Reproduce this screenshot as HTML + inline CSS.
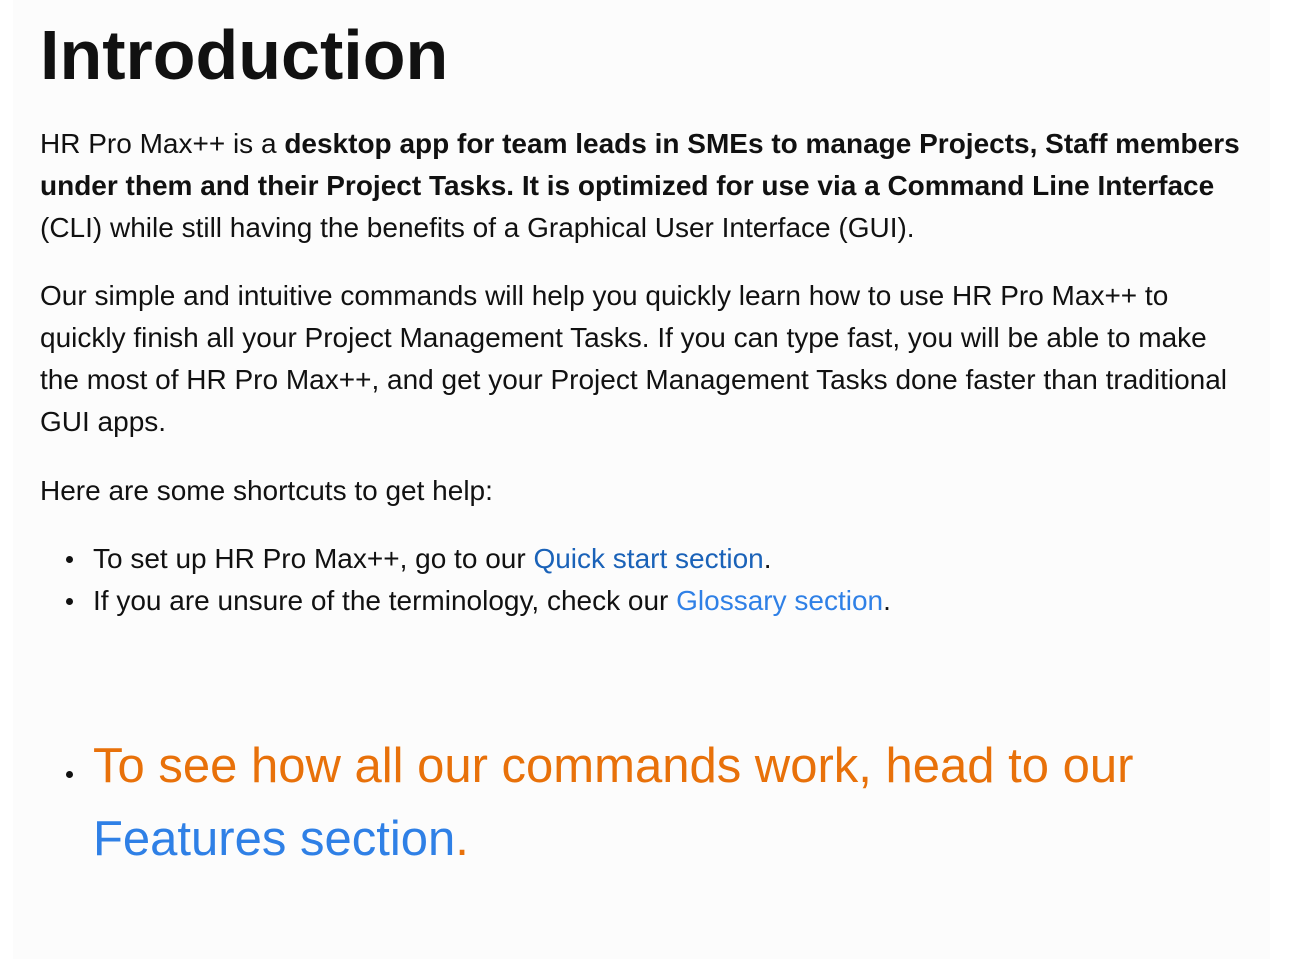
<!DOCTYPE html>
<html><head><meta charset="utf-8"><style>
html,body{margin:0;padding:0;background:#fff;}
body{width:1304px;height:959px;position:relative;overflow:hidden;font-family:"Liberation Sans",Arial,sans-serif;color:#111;}
.panel{position:absolute;left:13px;top:0;width:1257px;height:959px;background:#fcfcfc;}
.b{position:absolute;left:40px;margin:0;font-size:28px;line-height:42px;white-space:nowrap;}
h1{position:absolute;left:40px;top:15px;margin:0;font-size:70px;line-height:80px;font-weight:bold;color:#111;}
.dot{position:absolute;width:7px;height:7px;border-radius:50%;background:#111;}
a{text-decoration:none}
.q{color:#1a62b8}.g{color:#2f80e6}
.big{position:absolute;left:93px;top:730px;font-size:49px;line-height:73px;color:#e8710a;white-space:nowrap;}
</style></head><body>
<div class="panel"></div>
<h1>Introduction</h1>
<div class="b" style="top:123px">HR Pro Max++ is a <b>desktop app for team leads in SMEs to manage Projects, Staff members<br>under them and their Project Tasks. It is optimized for use via a Command Line Interface</b><br>(CLI) while still having the benefits of a Graphical User Interface (GUI).</div>
<div class="b" style="top:275px">Our simple and intuitive commands will help you quickly learn how to use HR Pro Max++ to<br>quickly finish all your Project Management Tasks. If you can type fast, you will be able to make<br>the most of HR Pro Max++, and get your Project Management Tasks done faster than traditional<br>GUI apps.</div>
<div class="b" style="top:470px">Here are some shortcuts to get help:</div>
<div class="dot" style="left:66px;top:556px"></div>
<div class="b" style="top:538px;left:93px">To set up HR Pro Max++, go to our <a class="q">Quick start section</a>.</div>
<div class="dot" style="left:66px;top:598px"></div>
<div class="b" style="top:580px;left:93px">If you are unsure of the terminology, check our <a class="g">Glossary section</a>.</div>
<div class="dot" style="left:66px;top:771px"></div>
<div class="big">To see how all our commands work, head to our<br><a class="g">Features section</a>.</div>
</body></html>
